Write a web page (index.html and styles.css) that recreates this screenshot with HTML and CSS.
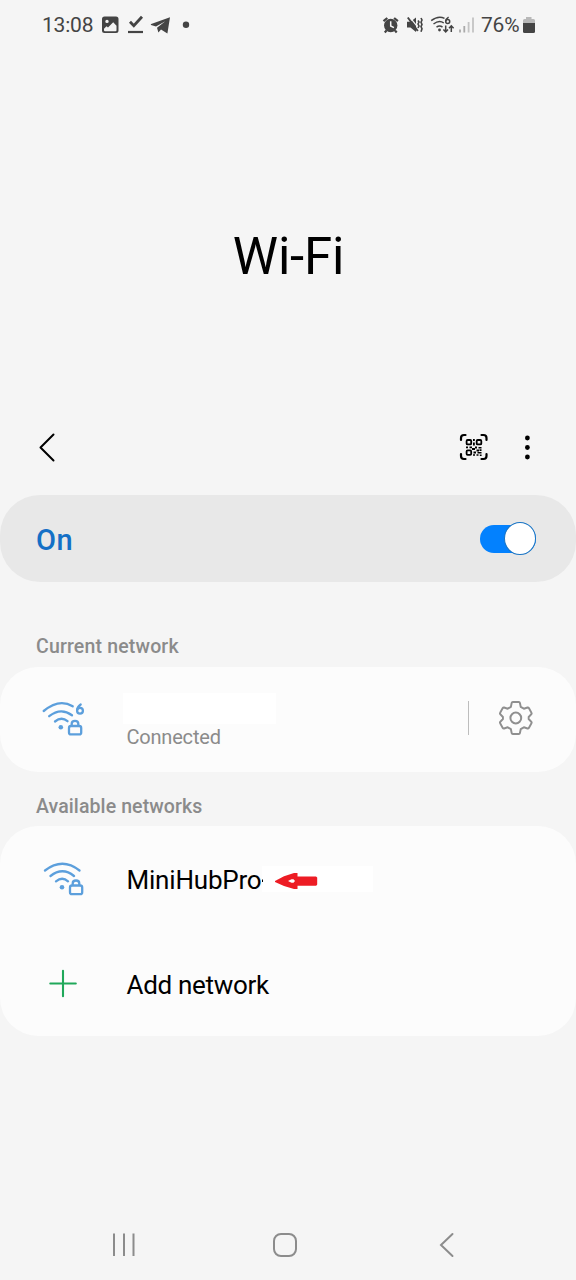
FILE: index.html
```html
<!DOCTYPE html>
<html lang="en">
<head>
<meta charset="utf-8">
<title>Wi-Fi</title>
<link rel="stylesheet" href="styles.css">
</head>
<body>
<div class="screen">
  <header class="status">
    <div class="status-group">
      <span class="clock">13:08</span>
      <svg class="icon" width="20" height="24" viewBox="100 13 20 24"><path fill="#444" fill-rule="evenodd" d="M104.5 16.500h11.500a2.500 2.500 0 0 1 2.500 2.500v11.500a2.500 2.500 0 0 1-2.500 2.500h-11.500a2.500 2.500 0 0 1-2.500-2.500V19a2.500 2.500 0 0 1 2.500-2.500zM104 28.800v1.400q0 1 1 1h10.500q1 0 1-1v-4.500l-3.300-3.400-5.200 5.300-1.500-1.300zM107 19.700a1.700 1.700 0 1 0 0 3.400 1.700 1.700 0 0 0 0-3.400z"/></svg>
      <svg class="icon check" width="20" height="24" viewBox="126 13 20 24"><path d="M130 21.800l3.800 3.900 8.200-9" fill="none" stroke="#444" stroke-width="2.800"/><path d="M128 32h15" stroke="#444" stroke-width="2.200"/></svg>
      <svg class="icon send" width="22" height="24" viewBox="150 13 22 24"><path fill="#444" d="M170 17.200l-2.600 16.300-6.400-4-2.600 3-1.400-4.700 8.300-6.500-9.300 5.200-5-1.600q-.6-.4.200-.8z"/></svg>
      <svg class="icon bullet" width="10" height="24" viewBox="181 13 10 24"><circle cx="186" cy="24.700" r="3.200" fill="#444"/></svg>
    </div>
    <div class="status-group">
      <svg class="icon" width="20" height="24" viewBox="381 13 20 24"><circle cx="390.700" cy="25.500" r="6.700" fill="#444"/><path d="M383.500 21.200l3.800-3.200M397.900 21.200l-3.800-3.200M386.500 30.500l-1.700 1.900M395 30.500l1.700 1.900" stroke="#444" stroke-width="2.200"/><path d="M390.700 21.300v4.700l3.200 1.600" fill="none" stroke="#f5f5f5" stroke-width="1.500"/></svg>
      <svg class="icon mute" width="20" height="24" viewBox="405 13 20 24"><path fill="#444" d="M407 21.800h3.500l5.500-4.300v14.500l-5.500-4.400H407z"/><path d="M410 17.300l7.500 9.500" stroke="#f5f5f5" stroke-width="1.200"/><path d="M407.800 17.500l10 13.500" stroke="#444" stroke-width="2"/><path d="M418 20.500l1 1.500-1 2 1 2-1 2M421 18l1 2-1 2.200 1 2.200-1 2.200 1 2.200-1 3" fill="none" stroke="#444" stroke-width="1.600"/></svg>
      <svg class="icon wifi-mini" width="26" height="24" viewBox="430 13 26 24"><g fill="none" stroke="#444" stroke-width="1.500"><path d="M431.200 20.700q7-5.600 13.300-2.400M433.500 24q5.700-4.300 10.300-1M436.500 27.200q3.200-2.200 6 0"/><path d="M448.600 17.200q-2.900 1.800-2.900 4.300"/><circle cx="447.700" cy="21.600" r="2"/><path d="M445.700 25.500v6M443.400 29.400l2.300 2.400 2.300-2.400M451.300 32v-6M449 28.200l2.300-2.400 2.300 2.400"/></g><circle cx="439.500" cy="30" r="1.400" fill="#444"/></svg>
      <svg class="icon signal" width="18" height="24" viewBox="458 13 18 24"><path d="M460 29.500v3M464.300 26v6.500" stroke="#aaa" stroke-width="1.800"/><path d="M468.600 22v10.500M473 17.500v15" stroke="#c4c4c4" stroke-width="1.800"/></svg>
      <span class="percent">76%</span>
      <svg class="icon battery" width="14" height="24" viewBox="522 13 14 24"><path fill="#b8b8b8" d="M526 17h5.500v2h2q1.500 0 1.500 1.500v3h-12v-3q0-1.500 1.500-1.500h1.500z"/><path fill="#444" d="M523 23h12v8.500q0 1.500-1.500 1.500h-9q-1.500 0-1.500-1.500z"/></svg>
    </div>
  </header>

  <h1 class="title">Wi-Fi</h1>

  <nav class="toolbar">
    <svg class="icon" width="24" height="32" viewBox="35 431 24 32"><path d="M53.500 434.500L40.500 447.500l13 13" fill="none" stroke="#000" stroke-width="2" stroke-linecap="round" stroke-linejoin="round"/></svg>
    <div class="tools">
      <svg class="icon" width="32" height="32" viewBox="458 431 32 32"><g fill="none" stroke="#000" stroke-width="2.200" stroke-linecap="round"><path d="M461 440v-2q0-3 3-3h1.500M481.500 435h2q3 0 3 3v2M486.500 454v2q0 3-3 3h-2M465.500 459H464q-3 0-3-3v-2"/></g><g fill="none" stroke="#000" stroke-width="1.800"><rect x="466.600" y="440" width="4.600" height="4.400" rx="1"/><rect x="476.700" y="440" width="4.600" height="4.400" rx="1"/><rect x="466.600" y="450.400" width="4.600" height="4.400" rx="1"/></g><path d="M473 439h1.800v2H473zM473 442.500h1.800v3H473zM466 446.500h2v1.800h-2zM469.500 446.500h2.500v1.800h-2.500zM472 448h3v2h-3zM475 446.500h2v2h-2zM478.500 447h3v1.500h-3zM476.500 449.500h2.500v2h-2.500zM479.500 449.300h2v1.700h-2zM473.500 451.500h2.500v2h-2.500zM477.500 452h4v1.600h-4zM473 454.300h2v1.500h-2zM476.500 454.300h2v1.500h-2zM479.800 454.500h1.800v1.500h-1.800z"/></svg>
      <svg class="icon" width="10" height="32" viewBox="522 431 10 32"><circle cx="527.400" cy="438" r="2.400"/><circle cx="527.400" cy="447.500" r="2.400"/><circle cx="527.400" cy="457" r="2.400"/></svg>
    </div>
  </nav>

  <section class="switch-row">
    <span class="switch-label">On</span>
    <div class="toggle"><div class="knob"></div></div>
  </section>

  <h2 class="section current-title">Current network</h2>
  <section class="card current">
    <svg class="icon" width="48" height="44" viewBox="40 696 48 44"><g fill="none" stroke="#5c9fdc" stroke-width="2.300" stroke-linecap="round"><path d="M43.700 711q15.500-13 29-4.700M49.200 716.200q11.500-9.200 22.800-1M55 721.500q6.500-5.300 12.500-.3"/><path d="M80.700 704.500q-3.400 2.500-3.600 5.500"/><circle cx="80" cy="710.700" r="2.900"/><rect x="69" y="726" width="12.200" height="8.400" rx="2"/><path d="M71.700 725.500v-1.700q0-3 3.300-3t3.300 3v1.700"/></g><circle cx="60.800" cy="727.200" r="2.300" fill="#5c9fdc"/></svg>
    <div class="details">
      <div class="blank"></div>
      <span class="sub">Connected</span>
    </div>
    <div class="divider"></div>
    <svg class="icon" width="38" height="38" viewBox="497 699 38 38"><g fill="none" stroke="#8f8f8f" stroke-width="2" stroke-linejoin="round"><circle cx="515.800" cy="718" r="5.400"/><path transform="translate(515.800 718) scale(.96 1) translate(-515.800 -718)" d="M512.700 702h6.200q1 0 1.200 1l.8 3.800 3.300 1.900 3.800-1.200q.9-.2 1.400.6l2.700 4.700q.5.800-.2 1.500l-2.700 2.700v2l2.700 2.700q.7.700.2 1.500l-2.700 4.700q-.5.800-1.400.6l-3.800-1.200-3.300 1.900-.8 3.800q-.2 1-1.200 1h-6.200q-1 0-1.200-1l-.8-3.800-3.300-1.900-3.800 1.200q-.9.200-1.400-.6l-2.700-4.700q-.5-.8.200-1.500l2.700-2.700v-2l-2.700-2.700q-.7-.7-.2-1.500l2.700-4.700q.5-.8 1.400-.6l3.800 1.200 3.300-1.900.8-3.800q.2-1 1.200-1z"/></g></svg>
  </section>

  <h2 class="section available-title">Available networks</h2>
  <section class="card available">
    <div class="row">
      <svg class="icon" width="48" height="44" viewBox="40 857 48 44"><g fill="none" stroke="#5c9fdc" stroke-width="2.300" stroke-linecap="round"><path d="M45 870.500q17.500-13.500 34.500 0M50.500 876q12-9.500 23.500 0M56 881.300q6.300-5 12 0"/><rect x="70" y="885.500" width="12.200" height="8.700" rx="2"/><path d="M72.700 885v-1.500q0-3 3.300-3t3.300 3v1.500"/></g><circle cx="62" cy="887.300" r="2.300" fill="#5c9fdc"/></svg>
      <span class="name hub">MiniHubPro</span>
      <div class="pointer">
        <svg class="icon" width="60" height="26" viewBox="262 866 60 26"><path d="M262 879.500h1v2.500h-1z"/><path fill="#ed1c24" fill-rule="evenodd" d="M275 881l9-4.800 10-3.200h3.500v3.500H316l1.200 1v7l-1 1.300h-18.700v3.200H294l-10-3-9-4zM288 881l3.500 1.700h2l1.500-1.700-1.500-1.700h-2z"/></svg>
      </div>
    </div>
    <div class="row">
      <svg class="icon" width="48" height="44" viewBox="40 962 48 44"><path d="M50.300 983.500h25.500M63 970.700v25.600" stroke="#20a85a" stroke-width="2.100" stroke-linecap="round"/></svg>
      <span class="name add-label">Add network</span>
    </div>
  </section>

  <footer class="navbar">
    <svg class="icon" width="30" height="30" viewBox="109 1230 30 30"><path d="M114 1233.500v22.500M124 1233.500v22.500M133.500 1233.500v22.500" stroke="#8c8c8c" stroke-width="2"/></svg>
    <svg class="icon" width="30" height="30" viewBox="271 1230 30 30"><rect x="274" y="1234" width="22" height="22" rx="7" fill="none" stroke="#8c8c8c" stroke-width="2"/></svg>
    <svg class="icon" width="30" height="30" viewBox="432 1230 30 30"><path d="M452.500 1234L441 1245l11.500 11" fill="none" stroke="#8c8c8c" stroke-width="2" stroke-linecap="round"/></svg>
  </footer>
</div>
</body>
</html>
```
FILE: styles.css
```css
* { box-sizing: border-box; }
body {
  margin: 0;
  background: #f5f5f5;
  color: #000;
  font-family: Roboto, "Liberation Sans", sans-serif;
}
.screen {
  width: 576px;
  height: 1280px;
  display: flex;
  flex-direction: column;
  overflow: hidden;
}
.icon { display: block; flex: none; }
.status {
  height: 50px;
  display: flex;
  justify-content: space-between;
  padding: 0 40px 0 42px;
  color: #444;
  font-size: 21px;
}
.status-group { display: flex; align-items: center; }
.clock { width: 58px; letter-spacing: -0.2px; }
.check { margin-left: 6px; }
.send { margin-left: 4px; }
.bullet { margin-left: 9px; }
.mute { margin-left: 4px; }
.wifi-mini { margin-left: 5px; }
.signal { margin-left: 2px; }
.percent { width: 41px; margin-left: 5px; letter-spacing: -0.2px; }
.title {
  height: 64px;
  margin: 175px 0 0;
  padding-left: 1px;
  font-size: 51px;
  font-weight: 400;
  line-height: 64px;
  letter-spacing: -0.2px;
  text-align: center;
}
.toolbar {
  height: 32px;
  margin-top: 142px;
  padding: 0 44px 0 35px;
  display: flex;
  justify-content: space-between;
}
.tools { display: flex; gap: 32px; }
.switch-row {
  height: 87px;
  margin-top: 32px;
  padding: 0 40px 0 36px;
  border-radius: 40px;
  background: #e8e8e8;
  display: flex;
  align-items: center;
  justify-content: space-between;
}
.switch-label {
  color: #1470c6;
  font-size: 29px;
  font-weight: 500;
  letter-spacing: 0.5px;
  padding-top: 2px;
}
.toggle {
  width: 56px;
  height: 28px;
  border-radius: 14px;
  background: #0381fe;
  display: flex;
  align-items: center;
  justify-content: flex-end;
}
.knob {
  width: 32px;
  height: 33px;
  flex: none;
  border: 1px solid #1773c4;
  border-radius: 50%;
  background: #fff;
}
.section {
  margin: 0;
  padding-left: 36px;
  color: #8b8b8b;
  font-size: 19.500px;
  font-weight: 500;
  line-height: 24px;
}
.current-title { margin-top: 53px; letter-spacing: 0.17px; }
.available-title { margin-top: 23px; letter-spacing: 0.1px; }
.card { background: #fcfcfc; border-radius: 38px; }
.current {
  height: 105px;
  margin-top: 8px;
  padding: 0 41px 3px 40px;
  display: flex;
  align-items: center;
}
.details { width: 345px; padding-left: 35px; }
.blank { width: 153px; height: 31px; margin-top: 7px; background: #fff; }
.sub {
  display: block;
  margin-left: 3.500px;
  color: #8b8b8b;
  font-size: 20px;
  line-height: 26px;
  letter-spacing: -0.2px;
}
.divider { width: 1px; height: 34px; margin: 0 28px 0 35px; background: #bdbdbd; }
.available { height: 210px; margin-top: 7px; }
.row { height: 105px; padding-left: 40px; display: flex; align-items: center; }
.name {
  margin-left: 38.500px;
  font-size: 26px;
  line-height: 32px;
  padding-top: 3px;
  letter-spacing: -0.2px;
}
.add-label { letter-spacing: -0.3px; }
.hub { width: 135.500px; }
.pointer { width: 111px; height: 26px; background: #fff; }
.navbar {
  height: 30px;
  margin-top: auto;
  margin-bottom: 20px;
  padding: 0 114px 0 109px;
  display: flex;
  justify-content: space-between;
}
```
